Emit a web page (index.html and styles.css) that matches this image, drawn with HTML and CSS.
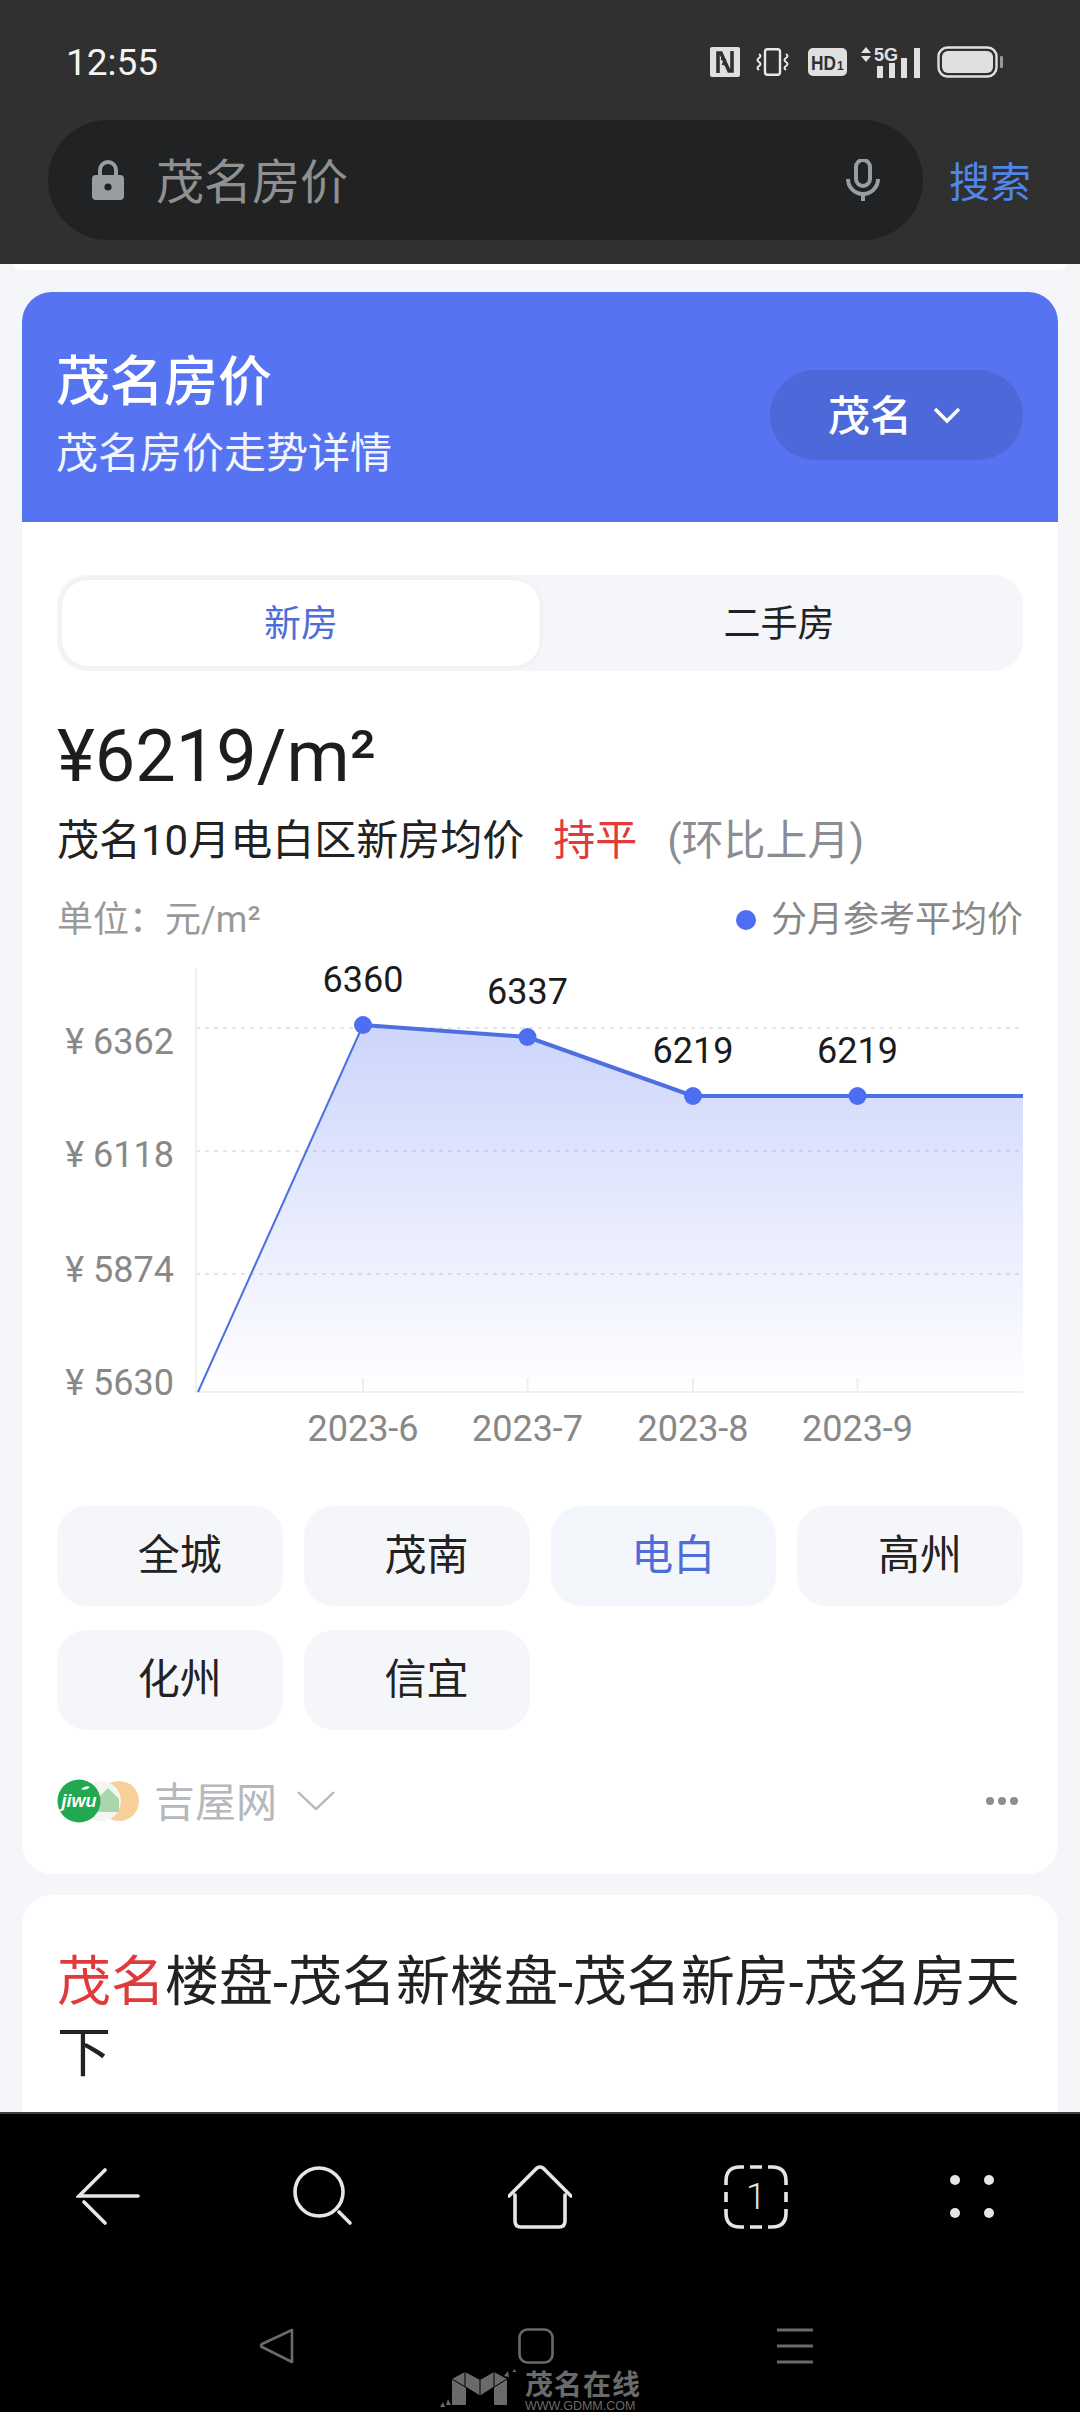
FILE: index.html
```html
<!DOCTYPE html>
<html lang="zh">
<head>
<meta charset="utf-8">
<title>茂名房价</title>
<link rel="stylesheet" href="styles.css">
</head>
<body>
<div class="screen">
  <header class="topbar">
    <div class="status">
      <span class="time">12:55</span>
      <div class="status-icons">
        <svg class="ic-nfc" viewBox="0 0 30 30"><rect width="30" height="30" rx="2" fill="#e0e0e0"/><path d="M8 26V6h3l8 18h3V4" fill="none" stroke="#303030" stroke-width="3.600"/><path d="M11 12l4 1-2 4 5 1" fill="none" stroke="#303030" stroke-width="2"/></svg>
        <svg class="ic-vib" viewBox="0 0 33 28"><rect x="9" y="1.200" width="15" height="25.600" rx="2.500" fill="none" stroke="#e8e8e8" stroke-width="2.400"/><path d="M3 6q3 2 0 4t0 4q3 2 0 4t0 4M30 6q3 2 0 4t0 4q3 2 0 4t0 4" fill="none" stroke="#e8e8e8" stroke-width="2"/></svg>
        <svg class="ic-hd" viewBox="0 0 39 28"><rect width="39" height="28" rx="5" fill="#e0e0e0"/><text x="3" y="21.500" class="hd-text" textLength="25" lengthAdjust="spacingAndGlyphs">HD</text><text x="29" y="21.500" class="hd-sub">1</text></svg>
        <svg class="ic-sig" viewBox="0 0 60 32"><path d="M0 7l5-6 5 6zM0 10l5 6 5-6z" fill="#e0e0e0"/><text x="13" y="15" class="sig-text">5G</text><rect x="16" y="20" width="6" height="12" fill="#e0e0e0"/><rect x="28" y="17" width="6" height="15" fill="#e0e0e0"/><rect x="40" y="12" width="6" height="20" fill="#e0e0e0"/><rect x="53" y="2" width="6" height="30" fill="#e0e0e0"/></svg>
        <svg class="ic-bat" viewBox="0 0 66 32"><rect x="1.500" y="1.500" width="58" height="29" rx="9" fill="none" stroke="#e0e0e0" stroke-width="2.400"/><rect x="5" y="5" width="51" height="22" rx="6" fill="#e0e0e0"/><rect x="63" y="10" width="3" height="12" rx="1" fill="#999"/></svg>
      </div>
    </div>
    <div class="searchrow">
      <div class="pill">
        <svg class="ic-lock" viewBox="0 0 32 40"><path d="M8 18v-8a8 8 0 0 1 16 0v8" fill="none" stroke="#9a9da0" stroke-width="4"/><rect y="15" width="32" height="25" rx="4" fill="#9a9da0"/><circle cx="16" cy="27" r="3.600" fill="#202223"/></svg>
        <span class="query">茂名房价</span>
        <svg class="ic-mic" viewBox="0 0 34 42"><rect x="10" y="1" width="14" height="26" rx="7" fill="none" stroke="#9a9da0" stroke-width="4"/><path d="M2 20a15 15 0 0 0 30 0M17 35v7" fill="none" stroke="#9a9da0" stroke-width="4"/></svg>
      </div>
      <span class="go">搜索</span>
    </div>
  </header>

  <main class="page">
    <div class="prev-tail"></div>
    <section class="card">
      <div class="hero">
        <div>
          <h1 class="hero-title">茂名房价</h1>
          <p class="hero-sub">茂名房价走势详情</p>
        </div>
        <div class="city">
          <span class="city-name">茂名</span>
          <svg class="ic-chev" viewBox="0 0 28 18"><path d="M2 3l12 12L26 3" fill="none" stroke="#fff" stroke-width="3.400"/></svg>
        </div>
      </div>
      <div class="body">
        <div class="tabs">
          <div class="tab tab-on">新房</div>
          <div class="tab">二手房</div>
        </div>
        <div class="price">¥6219/m²</div>
        <div class="desc">
          <span>茂名10月电白区新房均价</span>
          <span class="flat">持平</span>
          <span class="cmp">(环比上月)</span>
        </div>
        <div class="unit">
          <span>单位：元/m²</span>
          <span class="legend"><i class="legend-dot"></i>分月参考平均价</span>
        </div>
        <svg class="chart" viewBox="57 960 966 490">
          <defs>
            <linearGradient id="fill" x1="0" y1="0" x2="0" y2="1">
              <stop offset="0" stop-color="#5674f2" stop-opacity=".3"/>
              <stop offset="1" stop-color="#5674f2" stop-opacity="0"/>
            </linearGradient>
          </defs>
          <path class="grid" d="M196 1028H1023M196 1151H1023M196 1274H1023"/>
          <path class="axis" d="M196 968V1392H1023M363 1378V1392M527.500 1378V1392M693 1378V1392M857.500 1378V1392"/>
          <path d="M198 1392L363 1025L527.500 1037L693 1096H1023V1392Z" fill="url(#fill)"/>
          <path class="rise" d="M198 1392L363 1025"/>
          <path class="line" d="M363 1025L527.500 1037L693 1096H1023"/>
          <circle class="pt" cx="363" cy="1025" r="9"/>
          <circle class="pt" cx="527.500" cy="1037" r="9"/>
          <circle class="pt" cx="693" cy="1096" r="9"/>
          <circle class="pt" cx="857.500" cy="1096" r="9"/>
          <text class="val" x="363" y="992">6360</text>
          <text class="val" x="527.500" y="1004">6337</text>
          <text class="val" x="693" y="1063">6219</text>
          <text class="val" x="857.500" y="1063">6219</text>
          <text class="ylab" x="174" y="1054">¥ 6362</text>
          <text class="ylab" x="174" y="1167">¥ 6118</text>
          <text class="ylab" x="174" y="1282">¥ 5874</text>
          <text class="ylab" x="174" y="1395">¥ 5630</text>
          <text class="xlab" x="363" y="1441">2023-6</text>
          <text class="xlab" x="527.500" y="1441">2023-7</text>
          <text class="xlab" x="693" y="1441">2023-8</text>
          <text class="xlab" x="857.500" y="1441">2023-9</text>
        </svg>
        <div class="chips">
          <div class="chip">全城</div>
          <div class="chip">茂南</div>
          <div class="chip chip-on">电白</div>
          <div class="chip">高州</div>
          <div class="chip">化州</div>
          <div class="chip">信宜</div>
        </div>
        <div class="source">
          <svg class="logos" viewBox="0 0 84 44">
            <circle cx="62" cy="22" r="20" fill="#f7cf98"/>
            <circle cx="44" cy="22" r="20" fill="#f3f6f1"/>
            <path d="M40 20l11-11 11 11v13H40z" fill="#a9d6ad"/>
            <circle cx="22" cy="22" r="21.500" fill="#21a851"/>
            <path d="M24 10q5-4 9-2-4 4-9 2z" fill="#fff"/>
            <text class="jiwu" x="22" y="28">jiwu</text>
          </svg>
          <span class="source-name">吉屋网</span>
          <svg class="ic-more" viewBox="0 0 38 20"><path d="M1 1l18 17L37 1" fill="none" stroke="#b5b8bd" stroke-width="2.400"/></svg>
          <span class="dots"><i></i><i></i><i></i></span>
        </div>
      </div>
    </section>
    <section class="card result">
      <h2 class="result-title"><em>茂名</em><span>楼盘-茂名新楼盘-茂名新房-茂名房天下</span></h2>
    </section>
  </main>

  <footer class="bottom">
    <nav class="toolbar">
      <svg class="tool" viewBox="0 0 64 64"><path d="M29 5L3 31h59M8 37l21 21" fill="none" stroke="#e6e6e6" stroke-width="3.600" stroke-linecap="round"/></svg>
      <svg class="tool" viewBox="0 0 64 64"><circle cx="27" cy="27" r="24" fill="none" stroke="#e6e6e6" stroke-width="3.600"/><path d="M47 47l11 11" fill="none" stroke="#e6e6e6" stroke-width="3.600" stroke-linecap="round"/></svg>
      <svg class="tool" viewBox="0 0 64 64"><path d="M1 31L29 3q3-2 6 0l28 28M7 30v26q0 6 6 6h38q6 0 6-6V30" fill="none" stroke="#e6e6e6" stroke-width="3.600" stroke-linecap="round"/></svg>
      <svg class="tool" viewBox="0 0 64 64"><path d="M2 20v-4q0-14 14-14h4M26 2h12M44 2h4q14 0 14 14v4M62 27v10M62 44v4q0 14-14 14h-4M38 62H26M20 62h-4q-14 0-14-14v-4M2 37V27" fill="none" stroke="#e6e6e6" stroke-width="3.600"/><text class="tab-count" x="32" y="44">1</text></svg>
      <svg class="tool" viewBox="0 0 64 64"><circle cx="15" cy="15" r="5" fill="#e6e6e6"/><circle cx="49" cy="15" r="5" fill="#e6e6e6"/><circle cx="15" cy="48" r="5" fill="#e6e6e6"/><circle cx="49" cy="48" r="5" fill="#e6e6e6"/></svg>
    </nav>
    <nav class="sysnav">
      <svg class="sys" viewBox="0 0 36 36"><path d="M33 2v32L3 19q-2-1 0-3z" fill="none" stroke="#6a6a6a" stroke-width="2.600" stroke-linejoin="round"/></svg>
      <svg class="sys" viewBox="0 0 36 36"><rect x="1.500" y="1.500" width="33" height="33" rx="8" fill="none" stroke="#6a6a6a" stroke-width="2.600"/></svg>
      <svg class="sys" viewBox="0 0 36 36"><path d="M0 2h36M0 18h36M0 34h36" fill="none" stroke="#6a6a6a" stroke-width="3"/></svg>
    </nav>
    <div class="mark">
      <svg class="mark-logo" viewBox="0 0 80 44"><path d="M12 13L25 6l15 8 14-8 13 7v26H54V21l-14 9-14-9v18H12z" fill="#6a6a6a"/><path d="M25 6v15M54 6v15M12 13l28 17M67 13L40 30M40 14v16" stroke="#000" stroke-width="1" fill="none"/><path d="M0 41l3-5 2 5zM6 39l2-6 3 6zM64 10l4-5 1 6zM72 6l3-3 1 3z" fill="#6a6a6a"/></svg>
      <div class="mark-text">
        <span class="mark-name">茂名在线</span>
        <span class="mark-url">WWW.GDMM.COM</span>
      </div>
    </div>
  </footer>
</div>
</body>
</html>
```
FILE: styles.css
```css
* { box-sizing: border-box; }
html, body { margin: 0; padding: 0; }
body { font-family: Roboto, "Noto Sans CJK SC", sans-serif; color: #222; background: #000; }
h1, h2, p { margin: 0; font-weight: 400; }
em { font-style: normal; }
i { font-style: normal; display: block; }
svg { display: block; }

.screen { width: 1080px; height: 2412px; display: flex; flex-direction: column; overflow: hidden; position: relative; }

/* top */
.topbar { height: 264px; background: #303030; flex: none; }
.status { height: 120px; display: flex; align-items: center; justify-content: space-between; padding: 4px 77px 0 66px; }
.time { font-size: 37px; color: #f4f4f4; }
.status-icons { display: flex; align-items: center; gap: 16px; }
.ic-nfc { width: 30px; height: 30px; }
.ic-vib { width: 33px; height: 28px; margin-right: 3px; }
.ic-hd { width: 39px; height: 28px; margin-right: -2px; }
.ic-sig { width: 60px; height: 32px; }
.ic-bat { width: 66px; height: 32px; }
.hd-text { font: 700 21px "Liberation Sans", sans-serif; fill: #303030; }
.hd-sub { font: 700 12px "Liberation Sans", sans-serif; fill: #303030; }
.sig-text { font: 700 18px "Liberation Sans", sans-serif; fill: #e0e0e0; }

.searchrow { display: flex; align-items: center; padding-left: 48px; }
.pill { width: 875px; height: 120px; border-radius: 60px; background: #202223; display: flex; align-items: center; padding: 0 43px 0 44px; }
.ic-lock { width: 32px; height: 40px; }
.query { font-size: 48px; color: #909090; margin-left: 32px; flex: 1; padding-bottom: 5px; }
.ic-mic { width: 34px; height: 42px; }
.go { font-size: 41px; color: #4f86e8; margin-left: 26px; padding-bottom: 3px; }

/* page */
.page { flex: 1; min-height: 0; background: #f4f6f9; overflow: hidden; }
.prev-tail { height: 6px; margin: 0 14px 22px; background: #fff; border-radius: 0 0 14px 14px; }
.card { margin: 0 22px; background: #fff; border-radius: 30px; overflow: hidden; }
.hero { height: 230px; background: #5674f2; display: flex; align-items: center; justify-content: space-between; padding: 14px 35px 0 34px; color: #fff; }
.hero-title { font-size: 54px; font-weight: 500; line-height: 72px; }
.hero-sub { font-size: 42px; line-height: 56px; margin-top: 7px; color: #f2f5ff; }
.city { width: 253px; height: 90px; margin-top: 2px; border-radius: 45px; background: #4d69d9; display: flex; align-items: center; justify-content: center; gap: 21px; font-size: 42px; font-weight: 500; padding-right: 4px; }
.city-name { padding-bottom: 5px; }
.ic-chev { width: 28px; height: 18px; }

.body { padding: 53px 35px 43px; }
.tabs { height: 96px; border-radius: 30px; background: #f4f6f9; display: flex; padding: 5px; }
.tab { flex: 1; border-radius: 26px; display: flex; align-items: center; justify-content: center; font-size: 37px; color: #222; padding-bottom: 5px; }
.tab-on { background: #fff; color: #4e6ed6; box-shadow: 0 0 6px rgba(0, 0, 0, .06); }
.price { font-size: 72px; line-height: 84px; margin-top: 44px; color: #1d1d1f; }
.desc { display: flex; font-size: 42px; line-height: 56px; margin-top: 14px; }
.flat { color: #e03a3a; margin-left: 29px; }
.cmp { color: #8a8d94; margin-left: 30px; }
.unit { display: flex; justify-content: space-between; align-items: center; font-size: 36px; line-height: 50px; margin-top: 26px; color: #999; }
.legend { display: flex; align-items: center; color: #888; }
.legend-dot { width: 20px; height: 20px; border-radius: 50%; background: #4e6ef2; margin-right: 15px; }

.chart { width: 966px; height: 490px; margin-top: 15px; }
.grid { fill: none; stroke: #e4e6ea; stroke-width: 2; stroke-dasharray: 4 5; }
.axis { fill: none; stroke: #eeeff1; stroke-width: 2; }
.rise { fill: none; stroke: #4e6fe0; stroke-width: 2; }
.line { fill: none; stroke: #4e6fe0; stroke-width: 4; }
.pt { fill: #4e6ef2; }
.val { font-size: 36px; fill: #1b1b1b; text-anchor: middle; }
.ylab { font-size: 36px; fill: #888; text-anchor: end; }
.xlab { font-size: 36px; fill: #888; text-anchor: middle; }

.chips { display: grid; grid-template-columns: repeat(4, 1fr); gap: 24px 21px; margin-top: 56px; }
.chip { height: 100px; border-radius: 30px; background: #f4f6f9; display: flex; align-items: center; justify-content: center; font-size: 42px; color: #222; padding: 0 0 10px 20px; }
.chip-on { background: #f3f6fb; color: #4e6ed6; }

.source { display: flex; align-items: center; height: 60px; margin-top: 41px; }
.logos { width: 84px; height: 44px; }
.jiwu { font: italic 700 18px "Liberation Sans", sans-serif; fill: #fff; text-anchor: middle; }
.source-name { font-size: 41px; color: #b5b8bd; margin-left: 13px; padding-bottom: 5px; }
.ic-more { width: 38px; height: 20px; margin-left: 20px; }
.dots { margin-left: auto; display: flex; gap: 4px; padding-right: 5px; }
.dots i { width: 8px; height: 8px; border-radius: 50%; background: #8a8d94; }

.result { margin-top: 21px; padding: 52px 25px 0 35px; border-radius: 30px 30px 0 0; min-height: 300px; }
.result-title { font-size: 54px; line-height: 71px; color: #222; }
.result-title em { color: #e03a3a; }

/* bottom */
.bottom { height: 300px; flex: none; background: #000; position: relative; border-top: 2px solid #3a3d42; }
.toolbar { display: grid; grid-template-columns: repeat(5, 216px); justify-items: center; padding-top: 51px; }
.tool { width: 64px; height: 64px; }
.tab-count { font-family: Roboto, sans-serif; font-size: 36px; fill: #e6e6e6; text-anchor: middle; font-weight: 300; }
.sysnav { display: grid; grid-template-columns: 36px 36px 36px; column-gap: 223px; justify-content: center; justify-items: center; padding: 99px 8px 0 0; }
.sys { width: 36px; height: 36px; }
.mark { position: absolute; left: 440px; top: 252px; display: flex; align-items: flex-start; gap: 5px; color: #6a6a6a; }
.mark-logo { width: 80px; height: 44px; }
.mark-text { display: flex; flex-direction: column; width: 116px; padding-top: 6px; }
.mark-name { font-size: 28px; line-height: 28px; font-weight: 700; letter-spacing: 1px; white-space: nowrap; }
.mark-url { font: 12.500px/12px "Liberation Sans", sans-serif; white-space: nowrap; }
```
